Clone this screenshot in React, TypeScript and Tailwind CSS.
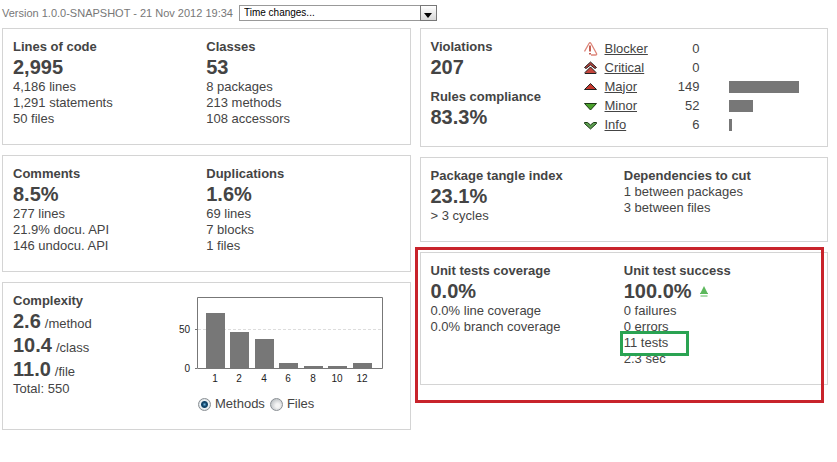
import React, { useState } from "react";

function Card({ children, pad = "pb-[17px]" }: { children: React.ReactNode; pad?: string }) {
  return <section className={`relative border border-[#d4d4d4] px-2.5 pt-2.5 ${pad}`}>{children}</section>;
}

function Title({ children }: { children: React.ReactNode }) {
  return <h2 className="font-bold">{children}</h2>;
}

function Big({ children }: { children: React.ReactNode }) {
  return <p className="text-[20px] leading-6 font-bold">{children}</p>;
}

function Metric({ title, value, lines }: { title: string; value?: string; lines: string[] }) {
  return (
    <div>
      <Title>{title}</Title>
      {value && <Big>{value}</Big>}
      {lines.map((line) => (
        <p key={line}>{line}</p>
      ))}
    </div>
  );
}

const BlockerIcon = () => (
  <svg width="14" height="14" viewBox="0 0 14 14" fill="none" aria-hidden="true">
    <path d="M0.500 9.500 5 1.500q1-1.500 2 0l5.500 10q.5 1.500-1 1.500H7" stroke="#dd8579" strokeWidth="1.300" />
    <path d="M6 3.500v6M6 11v1.500" stroke="#b93a2c" strokeWidth="1.600" />
  </svg>
);
const CriticalIcon = () => (
  <svg width="14" height="14" viewBox="0 0 14 14" aria-hidden="true">
    <path d="M.5 6.500 6.500 1l6 5.500-1.500 1L6.500 4 2 7.500z" fill="#b8413a" stroke="#222" />
    <path d="M1 11.500 6.500 6l5.500 5.500v1H1z" fill="#c4453c" stroke="#222" />
  </svg>
);
const MajorIcon = () => (
  <svg width="14" height="14" viewBox="0 0 14 14" aria-hidden="true">
    <path d="M.5 9.500 6.500 3.500l6 6z" fill="#c4392f" stroke="#222" strokeLinejoin="round" />
  </svg>
);
const MinorIcon = () => (
  <svg width="14" height="14" viewBox="0 0 14 14" aria-hidden="true">
    <path d="M.5 4.500h12L6.500 11z" fill="#4aa02c" stroke="#1d3a16" strokeLinejoin="round" />
  </svg>
);
const InfoIcon = () => (
  <svg width="14" height="14" viewBox="0 0 14 14" aria-hidden="true">
    <path d="M.5 4.500h3l3 2.500 3-2.500h3v1l-6 5.500-6-5.500z" fill="#5c9e50" stroke="#1d3a16" strokeLinejoin="round" />
  </svg>
);

const severities = [
  { name: "Blocker", count: 0, bar: 0, Icon: BlockerIcon },
  { name: "Critical", count: 0, bar: 0, Icon: CriticalIcon },
  { name: "Major", count: 149, bar: 70, Icon: MajorIcon },
  { name: "Minor", count: 52, bar: 24, Icon: MinorIcon },
  { name: "Info", count: 6, bar: 3, Icon: InfoIcon },
];

function Severities() {
  return (
    <table className="h-[95px]">
      <tbody>
        {severities.map(({ name, count, bar, Icon }) => (
          <tr key={name} className="h-[19px]">
            <td className="w-[21px] p-0">
              <Icon />
            </td>
            <th scope="row" className="w-[60px] p-0 text-left font-normal">
              <a href="#violations" className="underline">{name}</a>
            </th>
            <td className="w-[35px] p-0 text-right">{count}</td>
            <td className="p-0 pl-[29px]">
              <div className="h-3 bg-[#777]" style={{ width: bar }} />
            </td>
          </tr>
        ))}
      </tbody>
    </table>
  );
}

const bars = [
  { label: "1", x: 33, h: 55 },
  { label: "2", x: 57, h: 36 },
  { label: "4", x: 82, h: 29 },
  { label: "6", x: 106, h: 5 },
  { label: "8", x: 131, h: 2 },
  { label: "10", x: 155, h: 2 },
  { label: "12", x: 180, h: 5 },
];

function Chart() {
  return (
    <svg width="216" height="100" viewBox="0 0 216 100" role="img" aria-label="Complexity distribution" className="block font-['Liberation_Sans',sans-serif] text-[10px]">
      <path d="M25 36.500h184" stroke="#ddd" strokeDasharray="3 2" />
      {bars.map((b) => (
        <g key={b.label}>
          <rect x={b.x} y={75 - b.h} width="19" height={b.h} fill="#777" />
          <text x={b.x + 9} y="89" textAnchor="middle" fill="#222">{b.label}</text>
        </g>
      ))}
      <path d="M24.500 4.500h185v71h-185zM22 36.500h2M22 75.500h2" fill="none" stroke="#777" />
      <text x="17" y="40" textAnchor="end" fill="#222">50</text>
      <text x="17" y="79" textAnchor="end" fill="#222">0</text>
    </svg>
  );
}

function Radio({ label, checked, onChange }: { label: string; checked: boolean; onChange: () => void }) {
  return (
    <label className="flex items-center gap-1">
      <input
        type="radio"
        name="distribution"
        checked={checked}
        onChange={onChange}
        className="size-[13px] appearance-none rounded-full border border-[#8a8f94] bg-[radial-gradient(circle_at_60%_60%,#f4f4f4_20%,#c4c8cb_70%)] checked:bg-[radial-gradient(circle,#6db4dc_0,#12466b_2px,#12466b_3px,#eef2f4_4px,#d5dde2_6px)]"
      />
      {label}
    </label>
  );
}

export default function App() {
  const [mode, setMode] = useState("Methods");
  return (
    <main className="bg-white pr-[9px] pl-0.5 font-['Liberation_Sans',Arial,sans-serif] text-[13px] leading-4 text-[#444]">
      <header className="flex items-center gap-1.5 pt-[5px] pb-[7px] text-[11px] text-[#777]">
        <label htmlFor="period">Version 1.0.0-SNAPSHOT - 21 Nov 2012 19:34</label>
        <div className="relative w-[198px]">
          <select id="period" className="block h-4 w-full appearance-none border border-[#999] bg-white pl-1 text-[10px] leading-[14px] text-black">
            <option>Time changes...</option>
          </select>
          <span aria-hidden="true" className="pointer-events-none absolute inset-y-0 right-0 flex w-[17px] items-end justify-center border border-[#777] bg-linear-to-b from-white to-[#d8d8d8] pb-0.5">
            <svg width="8" height="5" viewBox="0 0 8 5">
              <path d="M0 0h8L4 5z" fill="#000" />
            </svg>
          </span>
        </div>
      </header>

      <div className="grid grid-cols-2 items-start gap-[9px]">
        <div className="flex flex-col gap-2.5">
          <Card>
            <div className="grid grid-cols-2">
              <Metric title="Lines of code" value="2,995" lines={["4,186 lines", "1,291 statements", "50 files"]} />
              <Metric title="Classes" value="53" lines={["8 packages", "213 methods", "108 accessors"]} />
            </div>
          </Card>
          <Card>
            <div className="grid grid-cols-2">
              <Metric title="Comments" value="8.5%" lines={["277 lines", "21.9% docu. API", "146 undocu. API"]} />
              <Metric title="Duplications" value="1.6%" lines={["69 lines", "7 blocks", "1 files"]} />
            </div>
          </Card>
          <Card>
            <div className="flex">
              <div className="w-40">
                <Title>Complexity</Title>
                {[["2.6", "/method"], ["10.4", "/class"], ["11.0", "/file"]].map(([value, unit]) => (
                  <div key={unit} className="flex items-baseline gap-1">
                    <Big>{value}</Big>
                    <span>{unit}</span>
                  </div>
                ))}
                <p>Total: 550</p>
              </div>
              <div>
                <Chart />
                <div className="mt-[3px] flex gap-[5px] pl-[25px]">
                  {["Methods", "Files"].map((m) => (
                    <Radio key={m} label={m} checked={mode === m} onChange={() => setMode(m)} />
                  ))}
                </div>
              </div>
            </div>
          </Card>
        </div>

        <div className="flex flex-col gap-2.5">
          <Card pad="pb-3">
            <div className="flex">
              <div className="flex w-[153px] flex-col gap-2.5">
                <Metric title="Violations" value="207" lines={[]} />
                <Metric title="Rules compliance" value="83.3%" lines={[]} />
              </div>
              <Severities />
            </div>
          </Card>
          <Card>
            <div className="grid grid-cols-2">
              <Metric title="Package tangle index" value="23.1%" lines={["> 3 cycles"]} />
              <Metric title="Dependencies to cut" lines={["1 between packages", "3 between files"]} />
            </div>
          </Card>
          <Card>
            <div className="grid grid-cols-2">
              <Metric title="Unit tests coverage" value="0.0%" lines={["0.0% line coverage", "0.0% branch coverage"]} />
              <div>
                <Title>Unit test success</Title>
                <div className="flex items-center gap-2">
                  <Big>100.0%</Big>
                  <svg width="8" height="11" viewBox="0 0 8 11" aria-hidden="true">
                    <path d="M4 0 7.500 7h-7z" fill="#5cb85c" />
                    <path d="M0 7.500h8M.5 10h7" stroke="#5cb85c" />
                  </svg>
                </div>
                <p>0 failures</p>
                <p>0 errors</p>
                <p className="relative">
                  11 tests
                  <span className="absolute -top-1 -left-1 h-[25px] w-[69px] border-3 border-[#2aa352]" />
                </p>
                <p>2.3 sec</p>
              </div>
            </div>
            <span className="pointer-events-none absolute -top-1.5 right-[3px] -bottom-[19px] -left-1.5 border-3 border-[#c8232b]" />
          </Card>
        </div>
      </div>
    </main>
  );
}
